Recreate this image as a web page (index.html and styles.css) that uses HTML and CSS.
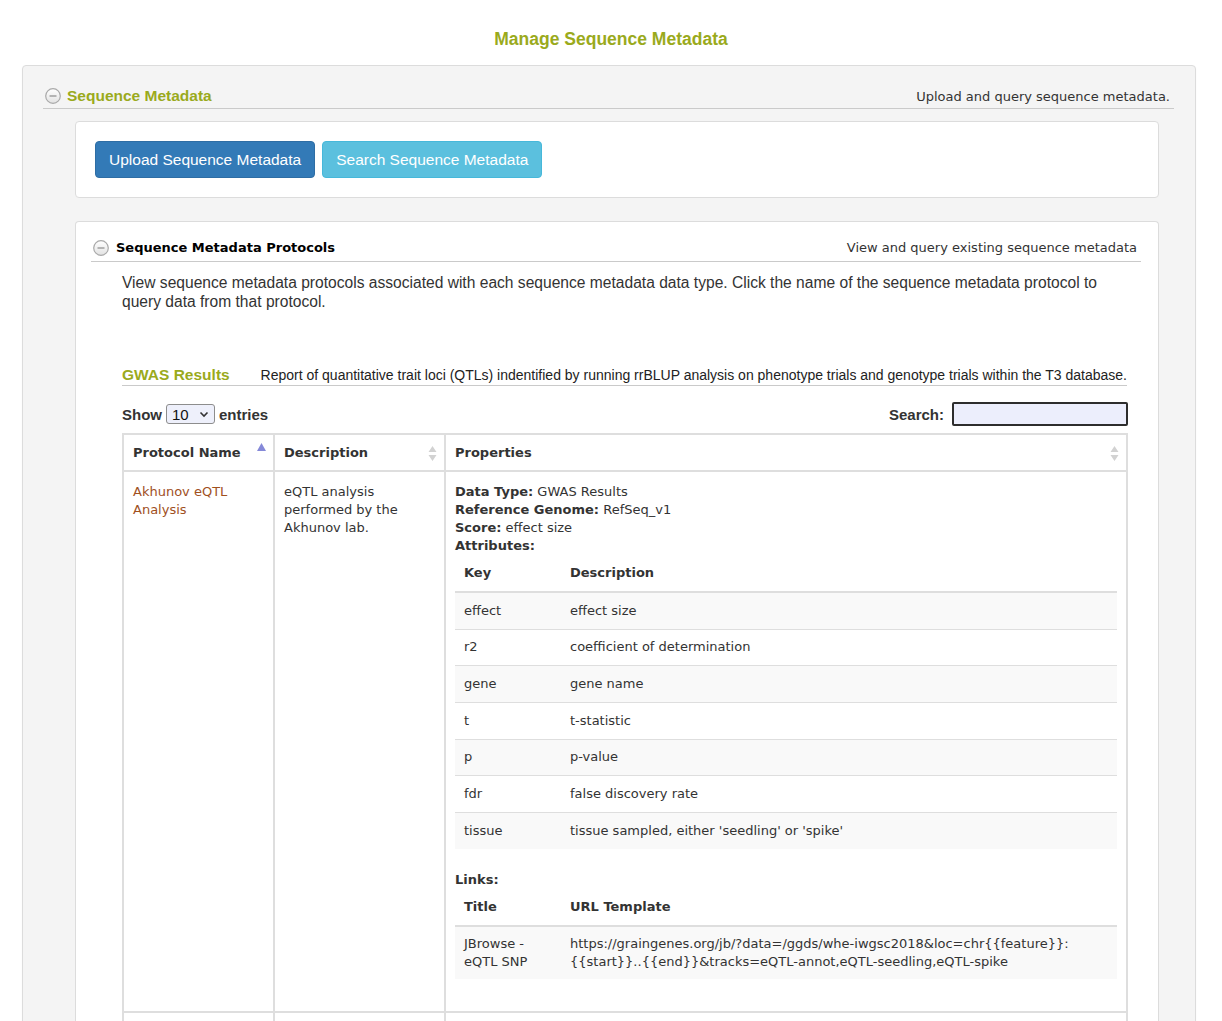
FILE: index.html
```html
<!DOCTYPE html>
<html lang="en">
<head>
<meta charset="utf-8">
<title>Manage Sequence Metadata</title>
<link rel="stylesheet" href="styles.css">
</head>
<body>
<h1 class="page-title">Manage Sequence Metadata</h1>

<div class="panel">
  <div class="pane-header">
    <svg class="toggle" width="16" height="16" viewBox="0 0 16 16"><defs><linearGradient id="tg1" x1="0" y1="0" x2="0" y2="1"><stop offset="0" stop-color="#ffffff"/><stop offset="1" stop-color="#e2e2e2"/></linearGradient></defs><circle cx="8" cy="8" r="7.3" fill="url(#tg1)" stroke="#a9a9a9" stroke-width="1.2"/><rect x="4.5" y="7.3" width="7" height="1.4" fill="#9a9a9a"/></svg>
    <span class="pane-title">Sequence Metadata</span>
    <span class="pane-desc">Upload and query sequence metadata.</span>
  </div>

  <div class="box box-buttons">
    <a class="btn btn-primary" href="#">Upload Sequence Metadata</a>
    <a class="btn btn-info" href="#">Search Sequence Metadata</a>
  </div>

  <div class="box box-protocols">
    <div class="pane-header sub-header">
      <svg class="toggle" width="16" height="16" viewBox="0 0 16 16"><defs><linearGradient id="tg2" x1="0" y1="0" x2="0" y2="1"><stop offset="0" stop-color="#ffffff"/><stop offset="1" stop-color="#e2e2e2"/></linearGradient></defs><circle cx="8" cy="8" r="7.3" fill="url(#tg2)" stroke="#a9a9a9" stroke-width="1.2"/><rect x="4.5" y="7.3" width="7" height="1.4" fill="#9a9a9a"/></svg>
      <span class="sub-title">Sequence Metadata Protocols</span>
      <span class="pane-desc">View and query existing sequence metadata</span>
    </div>

    <p class="intro">View sequence metadata protocols associated with each sequence metadata data type. Click the name of the sequence metadata protocol to query data from that protocol.</p>

    <div class="dtype-header">
      <span class="dtype-title">GWAS Results</span>
      <span class="dtype-desc">Report of quantitative trait loci (QTLs) indentified by running rrBLUP analysis on phenotype trials and genotype trials within the T3 database.</span>
    </div>

    <div class="dt-controls">
      <div class="dt-length">Show <span class="select"><span>10</span><svg width="10" height="7" viewBox="0 0 10 7"><path d="M1.5 1.5 L5 5 L8.5 1.5" fill="none" stroke="#333" stroke-width="1.6"/></svg></span> entries</div>
      <div class="dt-search">Search: <span class="search-input"></span></div>
    </div>

    <div class="dt-wrap">
      <table class="dt">
        <colgroup><col class="c1"><col class="c2"><col></colgroup>
        <thead>
          <tr>
            <th><div class="th-in"><span>Protocol Name</span><svg class="sort-asc" width="9" height="8" viewBox="0 0 9 8"><path d="M4.5 0 L9 8 L0 8 Z" fill="#8589d8"/></svg></div></th>
            <th><div class="th-in"><span>Description</span><svg class="sort-both" width="9" height="15" viewBox="0 0 9 15"><path d="M4.5 0 L8.5 6 L0.5 6 Z M4.5 15 L8.5 9 L0.5 9 Z" fill="#d2d2d2"/></svg></div></th>
            <th><div class="th-in"><span>Properties</span><svg class="sort-both" width="9" height="15" viewBox="0 0 9 15"><path d="M4.5 0 L8.5 6 L0.5 6 Z M4.5 15 L8.5 9 L0.5 9 Z" fill="#d2d2d2"/></svg></div></th>
          </tr>
        </thead>
        <tbody>
          <tr>
            <td><a class="proto-link" href="#">Akhunov eQTL Analysis</a></td>
            <td>eQTL analysis performed by the Akhunov lab.</td>
            <td class="props">
              <div><b>Data Type:</b> GWAS Results</div>
              <div><b>Reference Genome:</b> RefSeq_v1</div>
              <div><b>Score:</b> effect size</div>
              <div><b>Attributes:</b></div>
              <table class="inner attrs">
                <colgroup><col class="k"><col></colgroup>
                <thead><tr><th>Key</th><th>Description</th></tr></thead>
                <tbody>
                  <tr><td>effect</td><td>effect size</td></tr>
                  <tr><td>r2</td><td>coefficient of determination</td></tr>
                  <tr><td>gene</td><td>gene name</td></tr>
                  <tr><td>t</td><td>t-statistic</td></tr>
                  <tr><td>p</td><td>p-value</td></tr>
                  <tr><td>fdr</td><td>false discovery rate</td></tr>
                  <tr><td>tissue</td><td>tissue sampled, either 'seedling' or 'spike'</td></tr>
                </tbody>
              </table>
              <div><b>Links:</b></div>
              <table class="inner links">
                <colgroup><col class="k"><col></colgroup>
                <thead><tr><th>Title</th><th>URL Template</th></tr></thead>
                <tbody>
                  <tr><td>JBrowse - eQTL SNP</td><td>https://graingenes.org/jb/?data=/ggds/whe-iwgsc2018&amp;loc=chr{{feature}}:{{start}}..{{end}}&amp;tracks=eQTL-annot,eQTL-seedling,eQTL-spike</td></tr>
                </tbody>
              </table>
            </td>
          </tr>
          <tr class="next-row">
            <td></td>
            <td></td>
            <td></td>
          </tr>
        </tbody>
      </table>
    </div>
  </div>
</div>
</body>
</html>
```

FILE: styles.css
```css
* { box-sizing: border-box; }

body {
  margin: 0;
  font-family: "Liberation Sans", Arial, Helvetica, sans-serif;
  color: #333;
  background: #fff;
}

.page-title {
  margin: 28px 0 15px;
  text-align: center;
  font-size: 17.5px;
  line-height: 22px;
  font-weight: bold;
  color: #9aaa1c;
}

.panel {
  margin: 0 26px 0 22px;
  background: #f4f4f4;
  border: 1px solid #dcdcdc;
  border-radius: 4px;
  padding: 20px 21px 0 20px;
  box-shadow: 0 1px 2px rgba(0, 0, 0, 0.04);
}

.pane-header {
  display: flex;
  align-items: center;
  height: 23px;
  padding-bottom: 2px;
  border-bottom: 1px solid #cacaca;
}

.toggle {
  flex: none;
  margin-left: 2px;
  margin-right: 6px;
}

.pane-title {
  font-size: 15.5px;
  font-weight: bold;
  color: #9aaa1c;
}

.pane-desc {
  margin-left: auto;
  margin-right: 4px;
  font-family: "DejaVu Sans", Verdana, sans-serif;
  font-size: 13px;
  color: #333;
}

.box {
  background: #fff;
  border: 1px solid #dcdcdc;
  border-radius: 4px;
  margin: 12px 15px 0 32px;
}

.box-buttons {
  display: flex;
  gap: 7px;
  padding: 19px;
}

.btn {
  display: block;
  height: 37px;
  line-height: 35px;
  padding: 0 13px;
  border: 1px solid;
  border-radius: 4px;
  font-size: 15.5px;
  color: #fff;
  text-decoration: none;
}

.btn-primary { background: #337ab7; border-color: #2e6da4; }
.btn-info { background: #5bc0de; border-color: #46b8da; }

.box-protocols {
  margin-top: 23px;
  padding: 16px 17px 0 15px;
  border-bottom: none;
  border-radius: 4px 4px 0 0;
}

.sub-header {
  height: 24px;
  padding-bottom: 4px;
}

.sub-header .toggle { margin-right: 7px; }

.sub-title {
  font-family: "DejaVu Sans", Verdana, sans-serif;
  font-size: 13px;
  font-weight: bold;
  color: #000;
}

.intro {
  margin: 11px 13px 0 31px;
  font-size: 15.6px;
  line-height: 19px;
}

.dtype-header {
  display: flex;
  justify-content: space-between;
  align-items: baseline;
  margin: 55px 14px 0 31px;
  padding-bottom: 1px;
  border-bottom: 1px solid #cacaca;
  line-height: 18px;
}

.dtype-title {
  font-size: 15.5px;
  font-weight: bold;
  color: #9aaa1c;
}

.dtype-desc {
  font-size: 14px;
  color: #222;
}

.dt-controls {
  display: flex;
  justify-content: space-between;
  align-items: center;
  height: 24px;
  margin: 16px 13px 0 31px;
  font-size: 15px;
  font-weight: bold;
}

.dt-length, .dt-search {
  display: flex;
  align-items: center;
  gap: 4px;
}

.select {
  display: inline-flex;
  align-items: center;
  justify-content: space-between;
  width: 49px;
  height: 20px;
  padding: 0 5px 0 5px;
  border: 1px solid #8d8d8d;
  border-radius: 3px;
  background: #eef0fb;
  font-weight: normal;
  color: #111;
}

.search-input {
  display: block;
  width: 176px;
  height: 24px;
  margin-left: 4px;
  border: 2px solid #2d2d2d;
  border-radius: 2px;
  background: #eceefc;
}

.dt-wrap {
  margin: 7px 13px 0 31px;
}

.dt {
  width: 100%;
  table-layout: fixed;
  border-collapse: collapse;
  font-family: "DejaVu Sans", Verdana, sans-serif;
  font-size: 13px;
  color: #333;
}

.dt col.c1 { width: 151px; }
.dt col.c2 { width: 171px; }

.dt > thead > tr > th {
  border: 2px solid #dedede;
  padding: 8px 7px 8px 9px;
  line-height: 19px;
  text-align: left;
  font-weight: bold;
  color: #333;
}

.th-in {
  display: flex;
  justify-content: space-between;
  align-items: center;
}

.sort-asc { align-self: flex-start; margin-top: 0; }
.sort-both { margin-top: 1px; }

.dt > tbody > tr > td {
  border: 2px solid #dedede;
  padding: 11px 9px 10px 9px;
  vertical-align: top;
  line-height: 18px;
}

.proto-link {
  color: #a0501e;
  text-decoration: none;
}

.props b { color: #333; }

.next-row td { height: 60px; }

.inner {
  width: 100%;
  table-layout: fixed;
  border-collapse: collapse;
}

.inner col.k { width: 106px; }

.inner th {
  padding: 9px;
  line-height: 18px;
  text-align: left;
  font-weight: bold;
  border-bottom: 2px solid #dedede;
}

.inner td {
  padding: 9px;
  line-height: 18px;
  border-top: 1px solid #dedede;
}

.attrs { margin-bottom: 22px; }
.attrs tbody tr:nth-child(odd) td { background: #f9f9f9; }
.attrs td { padding: 8.83px 9px; }

.links { margin-bottom: 22px; }
.links td { padding: 8px 9px; background: #f9f9f9; }
```
